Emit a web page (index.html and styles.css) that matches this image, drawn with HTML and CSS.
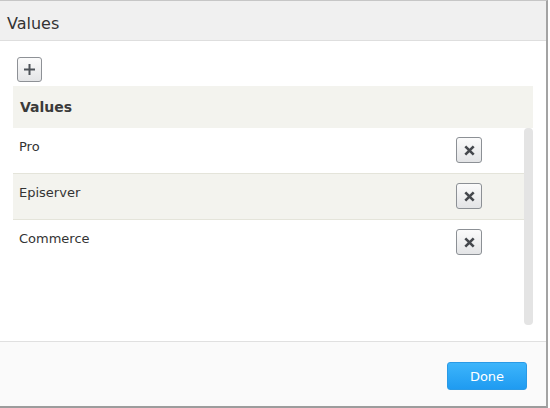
FILE: index.html
```html
<!DOCTYPE html>
<html>
<head>
<meta charset="utf-8">
<link rel="stylesheet" href="styles.css">
</head>
<body>
<div class="dialog">
  <div class="title">Values</div>
  <div class="content">
    <button class="btn-add" aria-label="Add">
      <svg width="13" height="13" viewBox="0 0 13 13"><path d="M6.5 1v11M1 6.5h11" stroke="#4d5258" stroke-width="2" fill="none"/></svg>
    </button>
    <div class="grid-head">Values</div>
    <div class="grid-body">
      <div class="rows">
        <div class="row"><span class="cell">Pro</span><button class="btn-del" aria-label="Remove"><svg width="11" height="11" viewBox="0 0 11 11"><path d="M1.3 1.3l8.4 8.4M9.7 1.3l-8.4 8.4" stroke="#45484d" stroke-width="2.6" fill="none"/></svg></button></div>
        <div class="row alt"><span class="cell">Episerver</span><button class="btn-del" aria-label="Remove"><svg width="11" height="11" viewBox="0 0 11 11"><path d="M1.3 1.3l8.4 8.4M9.7 1.3l-8.4 8.4" stroke="#45484d" stroke-width="2.6" fill="none"/></svg></button></div>
        <div class="row"><span class="cell">Commerce</span><button class="btn-del" aria-label="Remove"><svg width="11" height="11" viewBox="0 0 11 11"><path d="M1.3 1.3l8.4 8.4M9.7 1.3l-8.4 8.4" stroke="#45484d" stroke-width="2.6" fill="none"/></svg></button></div>
      </div>
      <div class="scrollbar"></div>
    </div>
  </div>
  <div class="footer">
    <button class="btn-done">Done</button>
  </div>
</div>
</body>
</html>
```
FILE: styles.css
```css
html, body {
  margin: 0;
  padding: 0;
  background: #ffffff;
}
body {
  font-family: "DejaVu Sans", Verdana, sans-serif;
  color: #333333;
}
.dialog {
  width: 548px;
  height: 408px;
  box-sizing: border-box;
  border-top: 1px solid #c6c6c6;
  border-right: 2px solid #a3a3a3;
  border-bottom: 2px solid #9c9c9c;
  display: flex;
  flex-direction: column;
  background: #ffffff;
}
.title {
  height: 40px;
  flex: none;
  box-sizing: border-box;
  background: #f0f0f0;
  border-bottom: 1px solid #dedede;
  padding-left: 7px;
  padding-top: 6px;
  display: flex;
  align-items: center;
  font-size: 16px;
  color: #333333;
}
.content {
  flex: 1;
  padding: 16px 13px 0 13px;
  display: flex;
  flex-direction: column;
  align-items: flex-start;
}
.btn-add {
  width: 25px;
  height: 25px;
  margin-left: 4px;
  padding: 0;
  border: 1px solid #8e9196;
  border-radius: 3px;
  background: linear-gradient(#fbfbfb, #e4e5e7);
  display: flex;
  align-items: center;
  justify-content: center;
}
.grid-head {
  margin-top: 4px;
  width: 520px;
  height: 42px;
  box-sizing: border-box;
  background: #f3f3ee;
  padding-left: 7px;
  padding-bottom: 1px;
  display: flex;
  align-items: center;
  font-size: 14px;
  font-weight: bold;
  color: #3a3a3a;
}
.grid-body {
  display: flex;
  width: 520px;
  height: 197px;
}
.rows {
  flex: 1;
  display: flex;
  flex-direction: column;
}
.row {
  height: 46px;
  box-sizing: border-box;
  border-bottom: 1px solid #e4e4da;
  display: flex;
  justify-content: space-between;
  align-items: flex-start;
  padding: 0 42px 0 6px;
}
.row:last-child {
  border-bottom: none;
}
.row.alt {
  background: #f3f3ee;
}
.cell {
  font-size: 13px;
  line-height: 15px;
  padding-top: 11px;
  color: #333333;
}
.btn-del {
  margin-top: 9px;
  width: 26px;
  height: 26px;
  padding: 0;
  border: 1px solid #8c9095;
  border-radius: 3px;
  background: linear-gradient(#fbfbfb, #e3e4e6);
  display: flex;
  align-items: center;
  justify-content: center;
}
.scrollbar {
  width: 9px;
  height: 197px;
  background: #e4e4e4;
  border-radius: 4px;
}
.footer {
  height: 65px;
  flex: none;
  box-sizing: border-box;
  border-top: 1px solid #e0e0e0;
  background: #fafafa;
  display: flex;
  justify-content: flex-end;
  align-items: flex-start;
  padding: 20px 19px 0 0;
}
.btn-done {
  width: 80px;
  height: 28px;
  padding: 0;
  border: 1px solid #2a9ae6;
  border-radius: 3px;
  background: linear-gradient(#3db5fb, #1f9bf1);
  color: #ffffff;
  font-family: "DejaVu Sans", Verdana, sans-serif;
  font-size: 13px;
}
```
